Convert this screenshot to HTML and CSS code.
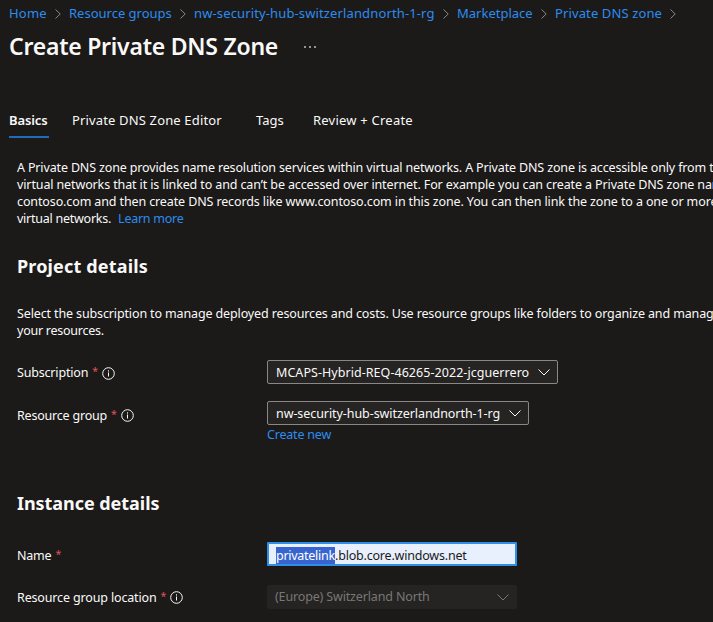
FILE: index.html
```html
<!DOCTYPE html>
<html lang="en">
<head>
<meta charset="utf-8">
<title>Create Private DNS Zone</title>
<link rel="stylesheet" href="styles.css">
</head>
<body>
<svg class="defs" aria-hidden="true">
  <symbol id="right" viewBox="0 0 6 10"><path d="M.5.5 5.2 5 .5 9.500"/></symbol>
  <symbol id="down" viewBox="0 0 12 7"><path d="M.5.5 6 6 11.500.5"/></symbol>
  <symbol id="info" viewBox="0 0 13 13"><circle cx="6.500" cy="6.500" r="5.800"/><path d="M6.500 5.500v4M6.500 3.300v1.300"/></symbol>
</svg>
<nav class="crumbs">
  <a class="c-home">Home</a><svg class="right"><use href="#right"/></svg>
  <a class="c-groups">Resource groups</a><svg class="right"><use href="#right"/></svg>
  <a class="c-rg">nw-security-hub-switzerlandnorth-1-rg</a><svg class="right"><use href="#right"/></svg>
  <a class="c-market">Marketplace</a><svg class="right"><use href="#right"/></svg>
  <a class="c-zone">Private DNS zone</a><svg class="right"><use href="#right"/></svg>
</nav>
<header class="title">
  <h1>Create Private DNS Zone</h1>
  <span class="more"><i></i><i></i><i></i></span>
</header>
<div class="tabs">
  <span class="tab t-basics">Basics</span>
  <span class="tab t-editor">Private DNS Zone Editor</span>
  <span class="tab t-tags">Tags</span>
  <span class="tab t-review">Review + Create</span>
</div>
<main>
  <p class="intro">
    <span class="line l1">A Private DNS zone provides name resolution services within virtual networks. A Private DNS zone is accessible only from the</span>
    <span class="line l2">virtual networks that it is linked to and can’t be accessed over internet. For example you can create a Private DNS zone named</span>
    <span class="line l3">contoso.com and then create DNS records like www.contoso.com in this zone. You can then link the zone to a one or more</span>
    <span class="line l4">virtual networks. <a class="learn">Learn more</a></span>
  </p>
  <h2 class="h-project">Project details</h2>
  <p class="desc">
    <span class="line l5">Select the subscription to manage deployed resources and costs. Use resource groups like folders to organize and manage</span>
    <span class="line l6">your resources.</span>
  </p>
  <div class="row row-sub">
    <label><span class="n-sub">Subscription</span><b>*</b><svg class="info low"><use href="#info"/></svg></label>
    <div class="select s-sub"><span class="v-sub">MCAPS-Hybrid-REQ-46265-2022-jcguerrero</span><svg class="down"><use href="#down"/></svg></div>
  </div>
  <div class="row row-rg">
    <label><span class="n-rg">Resource group</span><b>*</b><svg class="info"><use href="#info"/></svg></label>
    <div class="select s-rg"><span class="v-rg">nw-security-hub-switzerlandnorth-1-rg</span><svg class="down"><use href="#down"/></svg></div>
  </div>
  <a class="create">Create new</a>
  <h2 class="h-instance">Instance details</h2>
  <div class="row row-name">
    <label><span class="n-name">Name</span><b>*</b></label>
    <div class="input"><mark>privatelink</mark><span class="v-name">.blob.core.windows.net</span></div>
  </div>
  <div class="row row-loc">
    <label><span class="n-loc">Resource group location</span><b>*</b><svg class="info"><use href="#info"/></svg></label>
    <div class="select disabled"><span class="v-loc">(Europe) Switzerland North</span><svg class="down"><use href="#down"/></svg></div>
  </div>
</main>
</body>
</html>
```
FILE: styles.css
```css
* { box-sizing: border-box; }
body {
  margin: 0;
  height: 622px;
  overflow: hidden;
  background: #1b1a19;
  color: #faf9f8;
  font: 12.5px/17px "Noto Sans", "Open Sans", sans-serif;
}
h1, h2, p { margin: 0; }
svg { fill: none; stroke: currentColor; flex: none; }
.defs { display: none; }
a { color: #2d8cf0; }
.crumbs { display: flex; align-items: center; height: 26px; padding-left: 9px; font-size: 13px; white-space: nowrap; }
.crumbs a { flex: none; }
.c-home { width: 38px; letter-spacing: .2px; }
.c-groups { width: 103px; }
.c-rg { width: 241px; letter-spacing: .13px; }
.c-market { width: 76px; }
.c-zone { width: 107px; letter-spacing: .12px; }
.right { width: 6px; height: 10px; margin: 2px 8px 0; color: #8a8886; }
.title { display: flex; align-items: center; height: 42px; padding-left: 9px; }
h1 { width: 269px; margin-top: -2px; font-size: 23px; line-height: 32px; font-weight: 600; letter-spacing: -.24px; white-space: nowrap; }
.more { display: flex; gap: 3px; margin: 0 0 1px 26px; }
.more i { width: 2px; height: 2px; background: #979593; }
.tabs { display: flex; height: 70px; padding: 38px 0 0 9px; font-size: 13px; white-space: nowrap; }
.tab { height: 32px; padding-top: 6px; line-height: 17px; }
.t-basics { width: 40px; margin-right: 23px; font-weight: 600; letter-spacing: -.1px; border-bottom: 2px solid #1f6cbd; }
.t-editor { width: 184px; letter-spacing: .15px; }
.t-tags { width: 57px; }
.t-review { letter-spacing: .22px; }
main { padding: 21px 0 0 17px; overflow: hidden; }
.line { display: block; white-space: nowrap; height: 17px; }
.l1 { letter-spacing: -.147px; }
.l2 { letter-spacing: -.12px; }
.l3 { letter-spacing: -.12px; }
.l4 { letter-spacing: -.25px; }
.l5 { letter-spacing: -.13px; }
.l6 { letter-spacing: -.25px; }
.learn { margin-left: 4px; }
h2 { font-size: 18px; line-height: 26px; font-weight: 700; white-space: nowrap; }
.h-project { margin-top: 26px; letter-spacing: .16px; }
.h-instance { letter-spacing: -.05px; }
.desc { margin-top: 26px; }
.row { display: flex; align-items: center; height: 24px; }
.row label { display: flex; align-items: center; width: 250px; white-space: nowrap; }
.row b { margin: -1px 4px 0 4px; font-size: 10.5px; font-weight: 400; color: #e0525a; }
.n-sub { letter-spacing: -.18px; }
.n-rg { letter-spacing: -.2px; }
.n-name { letter-spacing: -.2px; }
.n-loc { letter-spacing: -.15px; }
.info { width: 13px; height: 13px; }
.low { margin-top: 3px; }
.select { display: flex; align-items: center; justify-content: space-between; height: 24px; padding: 0 7px 0 8px; border: 1px solid #8a8886; border-radius: 2px; background: #252423; white-space: nowrap; }
.down { width: 12px; height: 7px; }
.s-sub { width: 291px; }
.v-sub { letter-spacing: .05px; }
.s-rg { width: 262px; }
.v-rg { letter-spacing: -.07px; }
.row-sub { margin-top: 21px; }
.row-rg { margin-top: 17px; }
.row-rg label { padding-top: 4px; }
.create { display: block; margin: 1px 0 0 250px; letter-spacing: -.2px; }
.h-instance { margin-top: 47px; }
.row-name { margin-top: 26px; }
.row-name label { padding-top: 2px; }
.input { display: flex; align-items: center; width: 250px; height: 24px; padding: 2px 0 0 7px; border: 2px solid #2f8fe8; border-radius: 1px; background: #e8f0fe; color: #1b1a19; white-space: nowrap; }
mark { width: 59px; height: 17px; background: #3864d0; color: #fff; letter-spacing: -.27px; }
.v-name { letter-spacing: -.2px; }
.row-loc { margin-top: 19px; }
.disabled { width: 250px; padding-left: 7px; border-color: #252423; color: #797775; }
.v-loc { letter-spacing: -.15px; margin-top: -2px; }
```
